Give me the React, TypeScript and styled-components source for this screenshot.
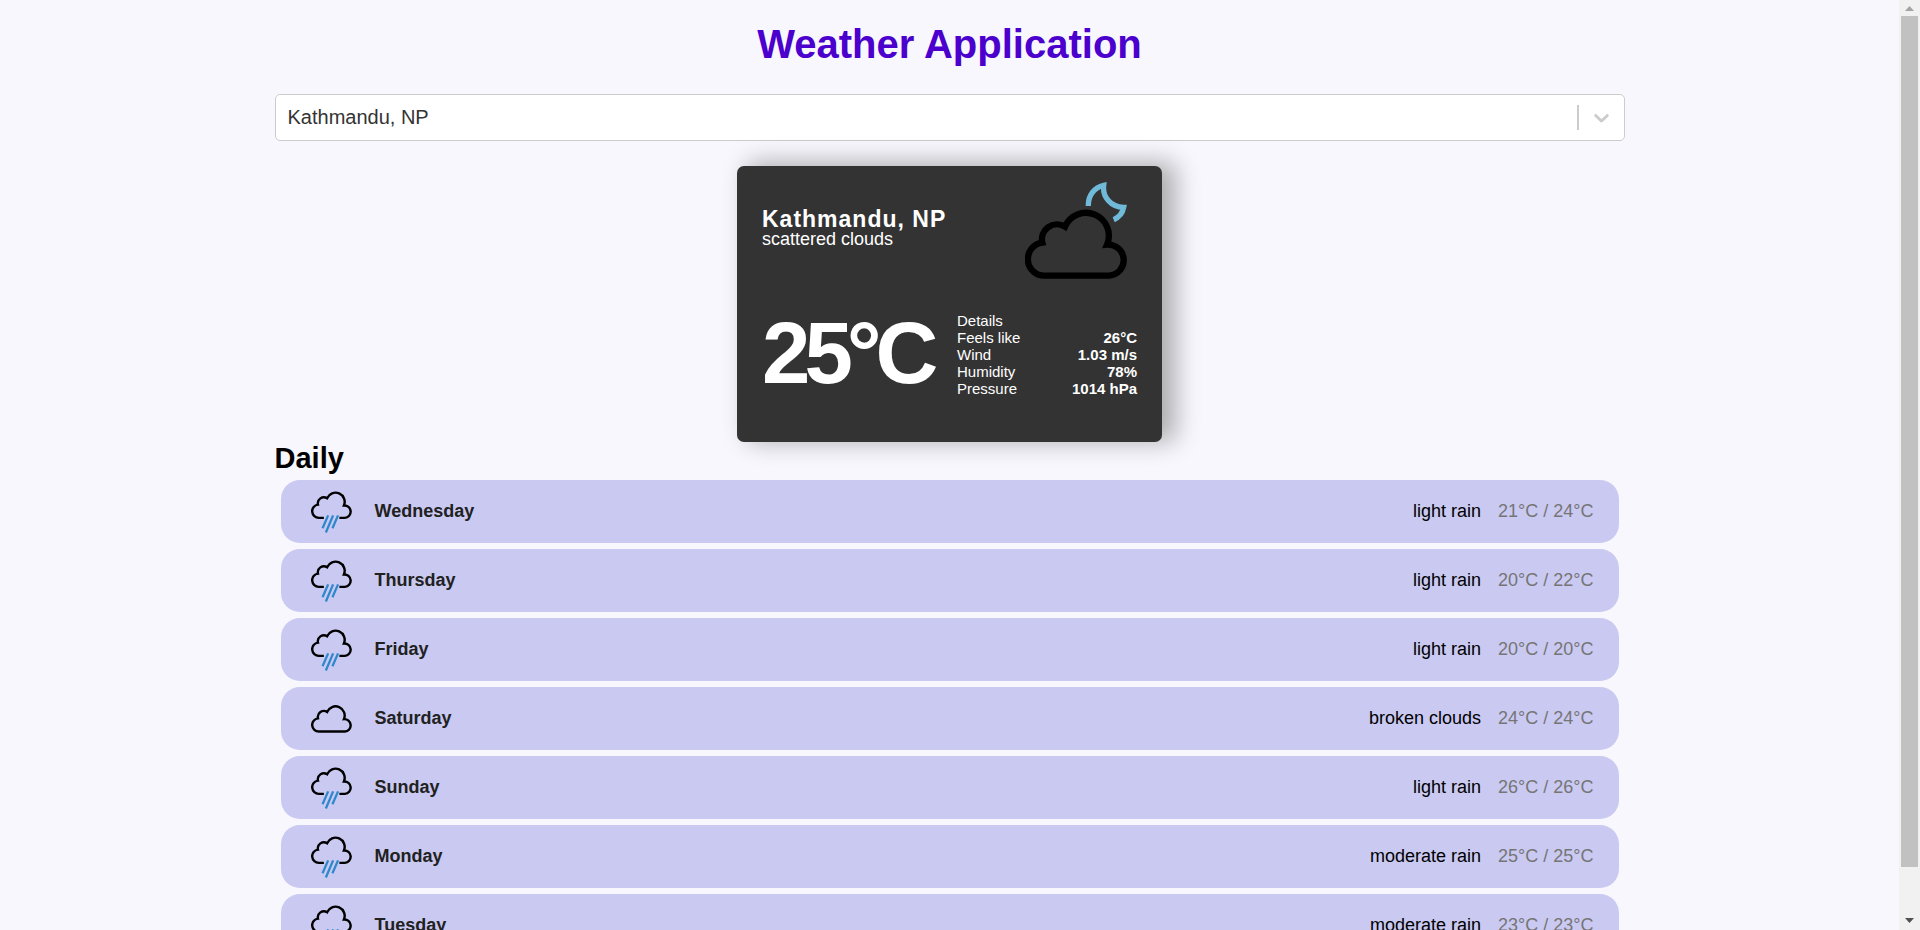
import React from "react";
import styled, { createGlobalStyle } from "styled-components";

const GlobalStyle = createGlobalStyle`
  *, *::before, *::after { box-sizing: border-box; }
  body {
    margin: 0;
    background: #f7f7fd;
    color: #000;
    font-family: "Liberation Sans", Arial, sans-serif;
  }
  h1, h2, p, ul, dl, dd { margin: 0; padding: 0; }
`;

const Shell = styled.div`
  display: flex;
  height: 100vh;
`;

const Page = styled.div`
  flex: 1;
  min-width: 0;
  overflow: hidden;
`;

const Container = styled.main`
  display: flex;
  flex-direction: column;
  width: 100%;
  max-width: 1350px;
  margin: 0 auto;
  padding-top: 21px;
`;

const Title = styled.h1`
  color: #4b00cd;
  font-size: 40px;
  line-height: 46px;
  text-align: center;
`;

const SearchBox = styled.div`
  display: grid;
  align-items: center;
  height: 47px;
  margin: 27px 0 25px;
  background: #fff;
  border: 1px solid #ccc;
  border-radius: 5px;
  overflow: hidden;

  > * { grid-area: 1 / 1; }
`;

const CitySelect = styled.select`
  appearance: none;
  width: 100%;
  height: 100%;
  padding: 0 12px 1px;
  border: 0;
  background: transparent;
  color: #333;
  font: 20px "Liberation Sans", Arial, sans-serif;
  outline: none;
`;

const Indicator = styled.span`
  display: flex;
  align-items: center;
  justify-self: end;
  gap: 10px;
  padding-right: 10px;
  color: #ccc;
  pointer-events: none;

  &::before {
    content: "";
    width: 2px;
    height: 25px;
    background: #ccc;
  }
`;

const Card = styled.section`
  display: flex;
  flex-direction: column;
  align-self: center;
  width: 425px;
  height: 276px;
  padding: 16px 25px 34px;
  border-radius: 7px;
  background: #333;
  color: #fff;
  box-shadow: 12px -2px 25px 2px rgba(0, 0, 0, 0.3);
`;

const CardTop = styled.div`
  display: flex;
  align-items: flex-start;
  justify-content: space-between;
  padding-right: 10px;
`;

const Place = styled.div`
  padding-top: 26px;
`;

const City = styled.p`
  font-size: 23px;
  font-weight: 700;
  line-height: 22px;
  letter-spacing: 1px;
`;

const Description = styled.p`
  font-size: 18px;
  line-height: 18px;
`;

const CardBottom = styled.div`
  display: flex;
  align-items: flex-start;
  justify-content: space-between;
  margin-top: 30px;
`;

const Temperature = styled.p`
  font-size: 87px;
  font-weight: 700;
  line-height: 88px;
  letter-spacing: -6px;
`;

const Details = styled.dl`
  width: 180px;
  padding-top: 3px;
  font-size: 15px;
  line-height: 17px;
`;

const DetailRow = styled.div`
  display: flex;
  justify-content: space-between;
`;

const DetailValue = styled.dd`
  font-weight: 700;
`;

const DailyTitle = styled.h2`
  font-size: 29px;
  line-height: 32px;
`;

const DayList = styled.ul`
  display: flex;
  flex-direction: column;
  gap: 6px;
  padding: 6px;
  list-style: none;
`;

const DayRow = styled.li`
  display: flex;
  align-items: center;
  height: 63px;
  padding: 0 25px 0 30px;
  border-radius: 19px;
  background: #cac9f2;
  font-size: 18px;
`;

const DayName = styled.span`
  flex: 1;
  margin-left: 23px;
  color: #212121;
  font-weight: 700;
`;

const DayTemps = styled.span`
  margin-left: 17px;
  color: #757575;
`;

const ScrollTrack = styled.div`
  display: flex;
  flex-direction: column;
  align-items: center;
  width: 21px;
  padding-bottom: 2px;
  background: #f1f1f1;
`;

const ScrollButton = styled.button`
  display: flex;
  align-items: center;
  justify-content: center;
  width: 21px;
  height: 16px;
  padding: 0;
  border: 0;
  background: transparent;
`;

const ScrollRail = styled.div`
  display: flex;
  flex: 1;
  width: 17px;
  padding-bottom: 45px;
`;

const ScrollThumb = styled.div`
  flex: 1;
  background: #c1c1c1;
`;

const CLOUD =
  "A49.7 49.7 0 0 1 97 218 A45 45 0 0 1 165 170 A68 68 0 0 1 291 224 A46.6 46.6 0 0 1 298 317";

function CloudMoonIcon() {
  return (
    <svg width="102" height="97" viewBox="45 36 306 291" fill="none" aria-hidden="true">
      <path
        d="M235 108 C234 78 252 52 281 46 C277 80 302 112 341 112 C338 128 328 142 311 149"
        stroke="#70b9d9"
        strokeWidth="16"
      />
      <path d={`M104 317 ${CLOUD} Z`} stroke="#000" strokeWidth="19" />
    </svg>
  );
}

function DayIcon({ rain }: { rain: boolean }) {
  return (
    <svg
      width="41"
      height="42"
      viewBox={rain ? "45 116 306 314" : "45 66 306 314"}
      fill="none"
      aria-hidden="true"
    >
      {rain ? (
        <>
          <path d={`M141 317 H104 ${CLOUD} H257`} stroke="#000" strokeWidth="18" />
          <path d="M173 298 L131 394 M210 298 L156 426 M247 298 L205 394" stroke="#2f88cb" strokeWidth="17" />
        </>
      ) : (
        <path d={`M104 317 ${CLOUD} Z`} stroke="#000" strokeWidth="18" />
      )}
    </svg>
  );
}

const details = [
  ["Feels like", "26°C"],
  ["Wind", "1.03 m/s"],
  ["Humidity", "78%"],
  ["Pressure", "1014 hPa"],
];

const days = [
  { name: "Wednesday", sky: "light rain", temps: "21°C / 24°C" },
  { name: "Thursday", sky: "light rain", temps: "20°C / 22°C" },
  { name: "Friday", sky: "light rain", temps: "20°C / 20°C" },
  { name: "Saturday", sky: "broken clouds", temps: "24°C / 24°C" },
  { name: "Sunday", sky: "light rain", temps: "26°C / 26°C" },
  { name: "Monday", sky: "moderate rain", temps: "25°C / 25°C" },
  { name: "Tuesday", sky: "moderate rain", temps: "23°C / 23°C" },
];

export default function App() {
  return (
    <>
      <GlobalStyle />
      <Shell>
        <Page>
          <Container>
            <Title>Weather Application</Title>
            <SearchBox>
              <CitySelect aria-label="City" defaultValue="Kathmandu, NP">
                <option>Kathmandu, NP</option>
              </CitySelect>
              <Indicator>
                <svg width="25" height="25" viewBox="0 0 20 20" fill="currentColor" aria-hidden="true">
                  <path d="M4.516 7.548c0.436-0.446 1.043-0.481 1.576 0l3.908 3.747 3.908-3.747c0.533-0.481 1.141-0.446 1.574 0 0.436 0.445 0.408 1.197 0 1.615-0.406 0.418-4.695 4.502-4.695 4.502-0.217 0.223-0.502 0.335-0.787 0.335s-0.57-0.112-0.789-0.335c0 0-4.287-4.084-4.695-4.502s-0.436-1.17 0-1.615z" />
                </svg>
              </Indicator>
            </SearchBox>
            <Card>
              <CardTop>
                <Place>
                  <City>Kathmandu, NP</City>
                  <Description>scattered clouds</Description>
                </Place>
                <CloudMoonIcon />
              </CardTop>
              <CardBottom>
                <Temperature>25°C</Temperature>
                <Details>
                  <DetailRow>
                    <dt>Details</dt>
                  </DetailRow>
                  {details.map(([label, value]) => (
                    <DetailRow key={label}>
                      <dt>{label}</dt>
                      <DetailValue>{value}</DetailValue>
                    </DetailRow>
                  ))}
                </Details>
              </CardBottom>
            </Card>
            <DailyTitle>Daily</DailyTitle>
            <DayList>
              {days.map((day) => (
                <DayRow key={day.name}>
                  <DayIcon rain={day.sky.includes("rain")} />
                  <DayName>{day.name}</DayName>
                  <span>{day.sky}</span>
                  <DayTemps>{day.temps}</DayTemps>
                </DayRow>
              ))}
            </DayList>
          </Container>
        </Page>
        <ScrollTrack>
          <ScrollButton aria-label="Scroll up">
            <svg width="9" height="5" viewBox="0 0 9 5" aria-hidden="true">
              <path d="M0 5 L4.5 0 L9 5 Z" fill="#a3a3a3" />
            </svg>
          </ScrollButton>
          <ScrollRail>
            <ScrollThumb />
          </ScrollRail>
          <ScrollButton aria-label="Scroll down">
            <svg width="9" height="5" viewBox="0 0 9 5" aria-hidden="true">
              <path d="M0 0 L4.5 5 L9 0 Z" fill="#505050" />
            </svg>
          </ScrollButton>
        </ScrollTrack>
      </Shell>
    </>
  );
}
